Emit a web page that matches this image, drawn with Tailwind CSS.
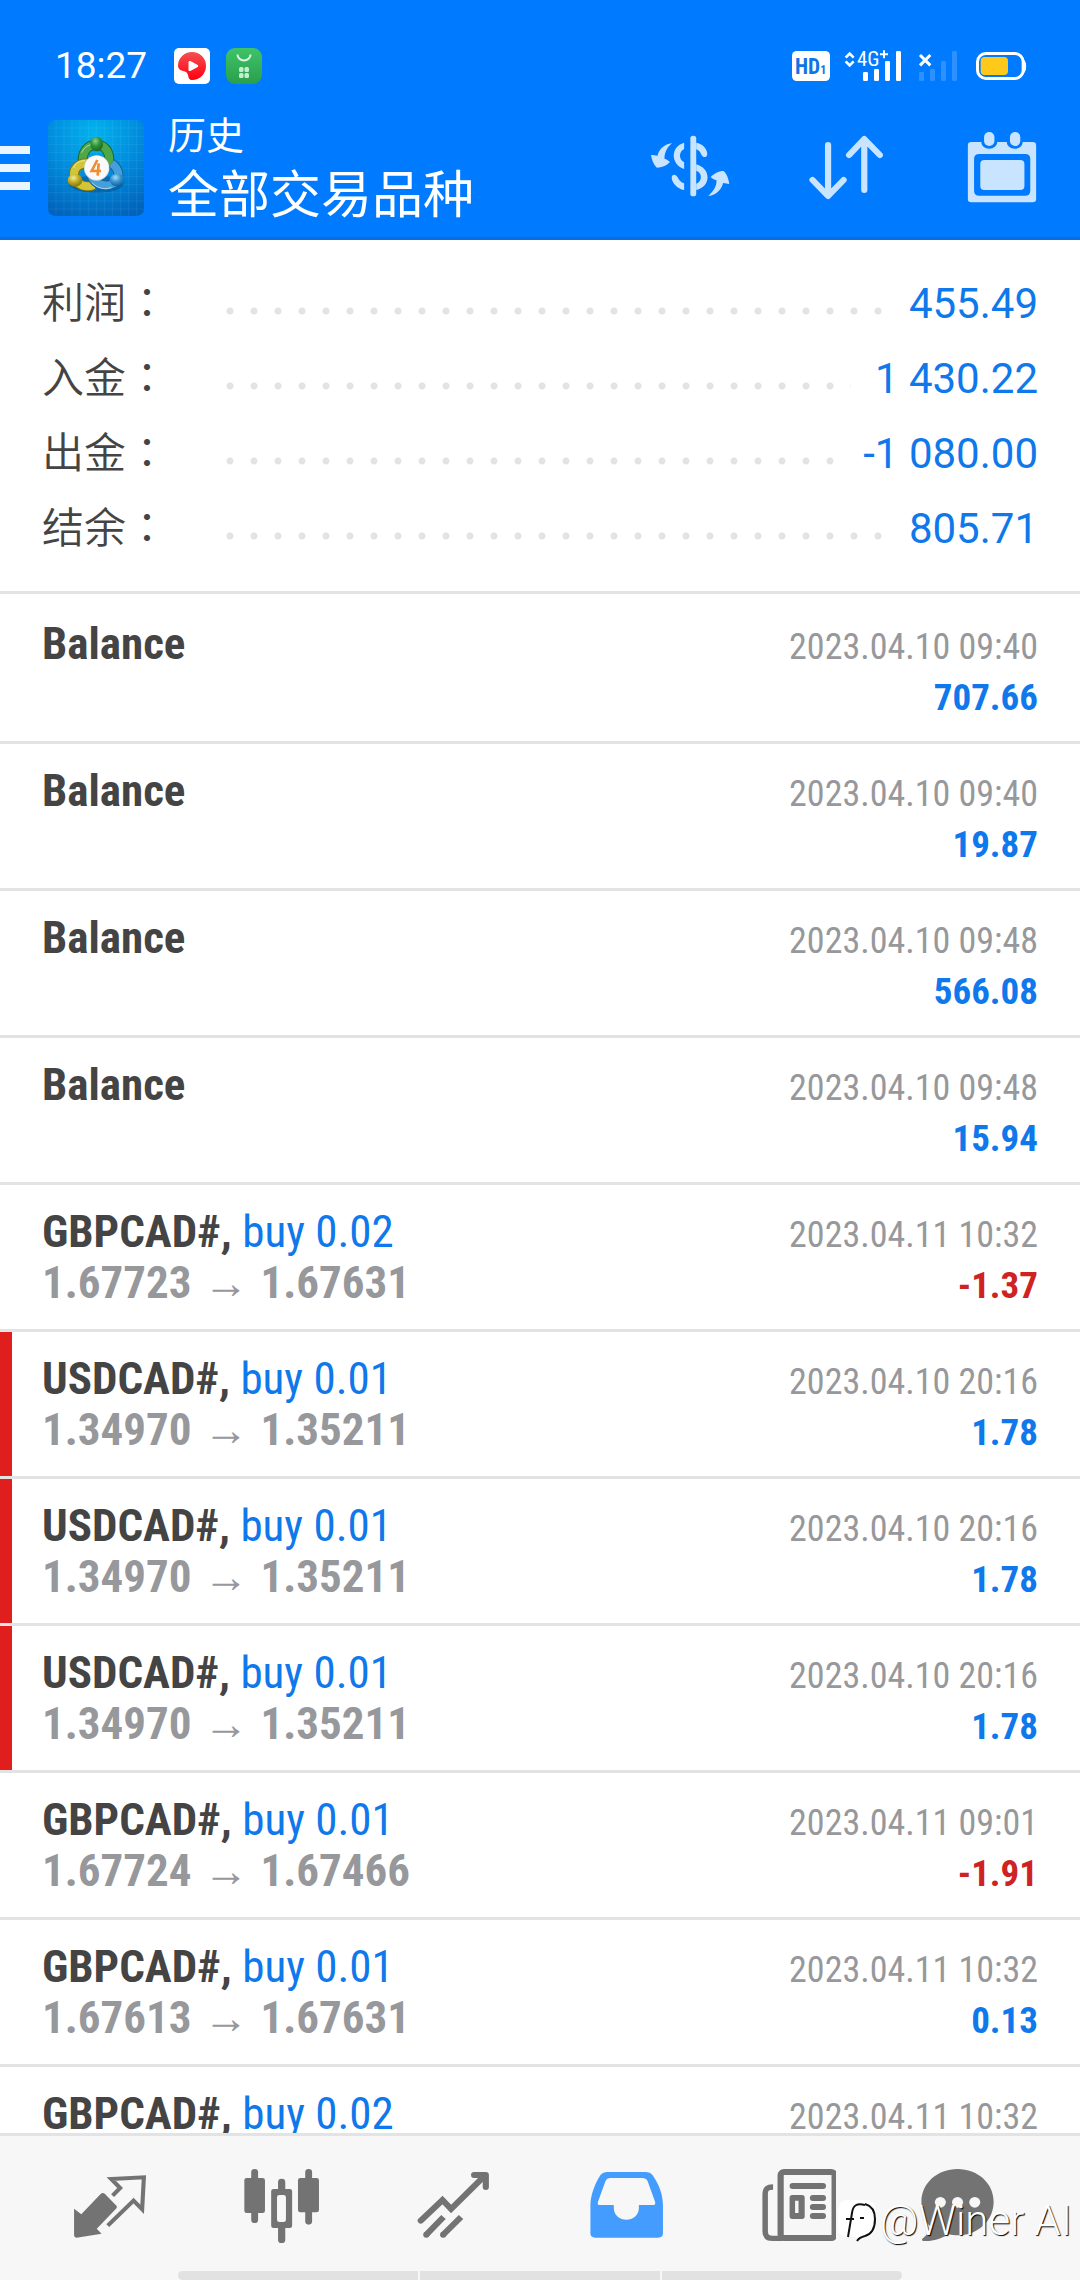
<!DOCTYPE html>
<html lang="zh-CN">
<head>
<meta charset="utf-8">
<meta name="viewport" content="width=device-width, initial-scale=1">
<title>历史</title>
<script src="https://cdn.jsdelivr.net/npm/@tailwindcss/browser@4"></script>
</head>
<body class="flex h-screen flex-col overflow-hidden bg-white font-['Roboto','Noto_Sans_CJK_SC',sans-serif] text-[#444]">

<header class="shrink-0 border-b-3 border-[#0a6fdc] bg-[#007aff] text-white">
  <!-- status bar -->
  <div class="flex items-center justify-between pt-[46px] pr-[50px] pl-[55px]">
    <div class="flex items-center gap-4">
      <span class="w-[103px] text-[37px] leading-10">18:27</span>
      <svg class="h-9 w-9" viewBox="0 0 36 36" aria-hidden="true">
        <defs><linearGradient id="red" x1="0" y1="0" x2="0" y2="1"><stop offset="0" stop-color="#f45050"/><stop offset="1" stop-color="#ff0010"/></linearGradient></defs>
        <rect width="36" height="36" rx="5" fill="#fff"/>
        <path d="M18 4a14 14 0 1 1 0 28c-3 0-3.500-2.500-4-5-.6-2.600-2-3.200-5-4-3-.8-5-2.500-5-5A14 14 0 0 1 18 4Z" fill="url(#red)"/>
        <path d="M14.500 14.500c0-1.500 1-2 2.300-1.300l6.500 3.500c1.200.7 1.200 1.900 0 2.600l-6.500 3.500c-1.300.7-2.300.2-2.300-1.300Z" fill="#fff"/>
      </svg>
      <svg class="h-9 w-9" viewBox="0 0 36 36" aria-hidden="true">
        <defs><linearGradient id="green" x1="0" y1="0" x2="0" y2="1"><stop offset="0" stop-color="#3ec368"/><stop offset="1" stop-color="#2a9f4c"/></linearGradient></defs>
        <rect width="36" height="36" rx="9" fill="url(#green)"/>
        <path d="M11.500 6.500a6.500 6 0 0 0 13 0" fill="none" stroke="#dff6e5" stroke-width="2"/>
        <g fill="#c5edcf"><rect x="13" y="19" width="4.500" height="5" rx="1.500"/><rect x="18.500" y="19" width="4.500" height="5" rx="1.500"/><rect x="13" y="25" width="4.500" height="5" rx="1.500"/><rect x="18.500" y="25" width="4.500" height="5" rx="1.500"/></g>
      </svg>
    </div>
    <svg class="h-10 w-60" viewBox="15 18 720 120" role="img" aria-label="HD 4G+">
      <rect x="21" y="33" width="114" height="90" rx="14" fill="#fff"/>
      <g class="font-['Roboto_Condensed',sans-serif]" fill="#0f74e6" font-weight="700"><text x="30" y="102" font-size="64">HD</text><text x="106" y="102" font-size="36">1</text></g>
      <g fill="none" stroke="#fff" stroke-width="8"><path d="m182 53 12-12 12 12M182 64l12 12 12-12"/></g>
      <g class="font-['Roboto_Condensed',sans-serif]" fill="#fff" font-weight="400"><text x="216" y="78" font-size="62">4G</text></g>
      <path d="M285 43h24M297 31v24" stroke="#fff" stroke-width="6"/>
      <g fill="#fff"><rect x="234" y="96" width="15" height="27" rx="4"/><rect x="267" y="87" width="15" height="36" rx="4"/><rect x="300" y="63" width="15" height="60" rx="4"/><rect x="333" y="33" width="15" height="90" rx="4"/></g>
      <g fill="#2d91ff"><rect x="402" y="96" width="15" height="27" rx="4"/><rect x="435" y="87" width="15" height="36" rx="4"/><rect x="468" y="63" width="15" height="60" rx="4"/><rect x="501" y="33" width="15" height="90" rx="4"/></g>
      <path d="m405 45 31 31M436 45l-31 31" stroke="#fff" stroke-width="9"/>
      <rect x="577.500" y="40.500" width="137" height="75" rx="25" fill="none" stroke="#fff" stroke-width="9"/>
      <path d="M717 62c5 6 7 26 0 34Z" fill="#fff" stroke="#fff" stroke-width="4"/>
      <rect x="587" y="51" width="82" height="54" rx="12" fill="#ffc91c"/>
    </svg>
  </div>
  <!-- title bar -->
  <div class="flex items-center pt-[22px] pr-[38px] pb-[9px]">
    <button type="button" aria-label="菜单" class="flex h-11 w-[30px] flex-col justify-between">
      <span class="h-2 w-full bg-[#eaf5ff]"></span><span class="h-2 w-full bg-[#eaf5ff]"></span><span class="h-2 w-full bg-[#eaf5ff]"></span>
    </button>
    <svg class="ml-[18px] h-24 w-24" viewBox="24 30 288 288" role="img" aria-label="MetaTrader 4">
      <defs>
        <radialGradient id="sky" cx=".48" cy=".12" r=".95"><stop offset="0" stop-color="#00b2ee"/><stop offset=".45" stop-color="#0090e0"/><stop offset="1" stop-color="#0062ba"/></radialGradient>
        <radialGradient id="gb" cx=".4" cy=".3" r=".7"><stop offset="0" stop-color="#8fd08a"/><stop offset=".5" stop-color="#2f9437"/><stop offset="1" stop-color="#1a6a22"/></radialGradient>
        <radialGradient id="yb" cx=".4" cy=".3" r=".7"><stop offset="0" stop-color="#f4ee9c"/><stop offset=".5" stop-color="#bfae22"/><stop offset="1" stop-color="#857809"/></radialGradient>
        <radialGradient id="bb" cx=".4" cy=".3" r=".7"><stop offset="0" stop-color="#a5dcf8"/><stop offset=".5" stop-color="#3594d2"/><stop offset="1" stop-color="#11629f"/></radialGradient>
      </defs>
      <rect x="24" y="30" width="288" height="288" rx="22" fill="url(#sky)"/>
      <path d="M48 30v288M72 30v288M96 30v288M120 30v288M145 30v288M169 30v288M193 30v288M217 30v288M242 30v288M266 30v288M290 30v288M24 54h288M24 79h288M24 103h288M24 127h288M24 151h288M24 175h288M24 200h288M24 224h288M24 248h288M24 273h288M24 297h288" stroke="#fff" stroke-opacity=".1" stroke-width="2"/>
      <ellipse cx="169" cy="222" rx="82" ry="26" fill="#003a70" opacity=".35"/>
      <g fill="none">
        <path d="M131 168c-10-38 10-64 38-64s48 28 34 66" stroke="#1b6d2b" stroke-width="30"/><path d="M131 168c-10-38 10-64 38-64s48 28 34 66" stroke="#4fa848" stroke-width="24"/>
        <path d="M148 160c-34-4-52 20-44 44 8 22 34 30 58 21" stroke="#7c7413" stroke-width="30"/><path d="M148 160c-34-4-52 20-44 44 8 22 34 30 58 21" stroke="#d2c636" stroke-width="24"/>
        <path d="M215 160c24 18 28 46 6 60-24 14-56 2-66-20" stroke="#15619c" stroke-width="30"/><path d="M215 160c24 18 28 46 6 60-24 14-56 2-66-20" stroke="#459fdb" stroke-width="24"/>
        <path d="M125 128c8-18 24-26 42-26M101 174c4-14 16-22 34-22M156 218c16 18 40 22 58 14" stroke="#fff" stroke-opacity=".55" stroke-width="3"/>
      </g>
      <ellipse cx="170" cy="102" rx="19" ry="22" fill="url(#gb)"/>
      <ellipse cx="105" cy="211" rx="22" ry="19" fill="url(#yb)"/>
      <ellipse cx="231" cy="210" rx="22" ry="19" fill="url(#bb)"/>
      <circle cx="170" cy="174" r="38" fill="#d7d9dc"/><circle cx="170" cy="173" r="36" fill="#fafafa"/>
      <path d="M172 150 155 183h28M176 160l-3 37" fill="none" stroke="#ef8d2f" stroke-width="8"/>
    </svg>
    <div class="ml-6 flex-1">
      <h1 class="text-[38px] leading-14">历史</h1>
      <p class="text-[51px] leading-16">全部交易品种</p>
    </div>
    <div class="flex gap-[76px]">
      <button type="button" aria-label="货币">
        <svg class="h-18 w-20" viewBox="319 336 232 216" preserveAspectRatio="none" fill="#c9e4ff">
          <rect x="436" y="347" width="17" height="182" rx="8"/>
          <path d="M453 368c18 3 32 18 32 34 0 12-12 12-17 2-4-9-8-14-15-16ZM418 368v19c-16 8-16 32 0 40v20c-40-15-40-67 0-79ZM453 433c44 12 44 68 0 77v-19c18-6 18-34 0-39ZM418 510c-20-4-36-22-36-37 0-12 13-11 17-1 4 9 10 16 19 18Z"/>
          <path d="M383 369c-22 4-38 18-42 38-6 0-14-2-19-2 2 16 8 30 17 38 14 0 28-6 38-17-5-5-10-8-16-10 0-20 8-34 22-47ZM488 528c24-3 38-19 43-39 6 0 13 3 18 3-2-15-7-31-17-39-14 0-28 8-37 18 5 5 10 8 17 10 0 20-10 34-24 47Z"/>
        </svg>
      </button>
      <button type="button" aria-label="排序">
        <svg class="h-18 w-20" viewBox="772 336 232 216" preserveAspectRatio="none" fill="none" stroke="#c9e4ff" stroke-width="18" stroke-linecap="round" stroke-linejoin="round"><path d="M836 375v152M791 480l45 48 45-48M941 510V358M897 405l44-48 45 48"/></svg>
      </button>
      <button type="button" aria-label="日历">
        <svg class="h-18 w-20" viewBox="1225 336 232 216" preserveAspectRatio="none" fill="#c9e4ff">
          <path fill-rule="evenodd" d="M1252 366h29c0 12 10 20 23 20s23-8 23-20h28c0 12 10 20 23 20s23-8 23-20h29q10 0 10 10v161q0 10-10 10h-178q-10 0-10-10V376q0-10 10-10ZM1275 402q-15 0-15 15v95q0 15 15 15h133q15 0 15-15v-95q0-15-15-15Z"/>
          <rect x="1278" y="420" width="128" height="90" rx="12"/><rect x="1289" y="336" width="30" height="42" rx="15"/><rect x="1364" y="336" width="30" height="42" rx="15"/>
        </svg>
      </button>
    </div>
  </div>
</header>

<main class="min-h-0 flex-1 overflow-y-auto [scrollbar-width:none]">
  <dl class="border-b-3 border-[#e3e3e3] px-[42px] pt-[26px] pb-[25px] text-[42px] leading-[75px]">
    <div class="flex h-[75px]"><dt class="w-44 font-[350]">利润<span lang="zh-TW" class="font-['Noto_Sans_CJK_TC'] leading-none">：</span></dt><dd class="mr-6 flex-1 bg-[radial-gradient(circle_at_12px_45px,#e3e3e3_3px,transparent_4px)] bg-[length:24px_75px] bg-repeat-x" aria-hidden="true"></dd><dd class="text-[#0f78eb]">455.49</dd></div>
    <div class="flex h-[75px]"><dt class="w-44 font-[350]">入金<span lang="zh-TW" class="font-['Noto_Sans_CJK_TC'] leading-none">：</span></dt><dd class="mr-6 flex-1 bg-[radial-gradient(circle_at_12px_45px,#e3e3e3_3px,transparent_4px)] bg-[length:24px_75px] bg-repeat-x" aria-hidden="true"></dd><dd class="text-[#0f78eb]">1 430.22</dd></div>
    <div class="flex h-[75px]"><dt class="w-44 font-[350]">出金<span lang="zh-TW" class="font-['Noto_Sans_CJK_TC'] leading-none">：</span></dt><dd class="mr-6 flex-1 bg-[radial-gradient(circle_at_12px_45px,#e3e3e3_3px,transparent_4px)] bg-[length:24px_75px] bg-repeat-x" aria-hidden="true"></dd><dd class="text-[#0f78eb]">-1 080.00</dd></div>
    <div class="flex h-[75px]"><dt class="w-44 font-[350]">结余<span lang="zh-TW" class="font-['Noto_Sans_CJK_TC'] leading-none">：</span></dt><dd class="mr-6 flex-1 bg-[radial-gradient(circle_at_12px_45px,#e3e3e3_3px,transparent_4px)] bg-[length:24px_75px] bg-repeat-x" aria-hidden="true"></dd><dd class="text-[#0f78eb]">805.71</dd></div>
  </dl>

  <ul class="pt-[3px] font-['Roboto_Condensed','Noto_Sans_CJK_SC',sans-serif] text-[45px] leading-[51px]">
    <li class="border-b-3 border-[#e3e3e3]"><div class="border-l-12 border-transparent pt-[21px] pr-[42px] pb-[21px] pl-[30px]">
      <div class="flex h-[51px] items-baseline justify-between"><b class="font-bold">Balance</b><time class="text-[36px] text-[#97989c]">2023.04.10 09:40</time></div>
      <div class="h-[51px] text-right"><b class="text-[37px] font-bold text-[#0f78eb]">707.66</b></div>
    </div></li>
    <li class="border-b-3 border-[#e3e3e3]"><div class="border-l-12 border-transparent pt-[21px] pr-[42px] pb-[21px] pl-[30px]">
      <div class="flex h-[51px] items-baseline justify-between"><b class="font-bold">Balance</b><time class="text-[36px] text-[#97989c]">2023.04.10 09:40</time></div>
      <div class="h-[51px] text-right"><b class="text-[37px] font-bold text-[#0f78eb]">19.87</b></div>
    </div></li>
    <li class="border-b-3 border-[#e3e3e3]"><div class="border-l-12 border-transparent pt-[21px] pr-[42px] pb-[21px] pl-[30px]">
      <div class="flex h-[51px] items-baseline justify-between"><b class="font-bold">Balance</b><time class="text-[36px] text-[#97989c]">2023.04.10 09:48</time></div>
      <div class="h-[51px] text-right"><b class="text-[37px] font-bold text-[#0f78eb]">566.08</b></div>
    </div></li>
    <li class="border-b-3 border-[#e3e3e3]"><div class="border-l-12 border-transparent pt-[21px] pr-[42px] pb-[21px] pl-[30px]">
      <div class="flex h-[51px] items-baseline justify-between"><b class="font-bold">Balance</b><time class="text-[36px] text-[#97989c]">2023.04.10 09:48</time></div>
      <div class="h-[51px] text-right"><b class="text-[37px] font-bold text-[#0f78eb]">15.94</b></div>
    </div></li>
    <li class="border-b-3 border-[#e3e3e3]"><div class="border-l-12 border-transparent pt-[21px] pr-[42px] pb-[21px] pl-[30px]">
      <div class="flex h-[51px] items-baseline justify-between"><p><b class="font-bold">GBPCAD#,</b> <span class="text-[#0f78eb]">buy 0.02</span></p><time class="text-[36px] text-[#97989c]">2023.04.11 10:32</time></div>
      <div class="flex h-[51px] items-baseline justify-between"><p class="flex items-baseline gap-3 font-bold text-[#97989c]"><span>1.67723</span><span class="font-['Liberation_Sans'] leading-none">→</span><span>1.67631</span></p><b class="text-[37px] font-bold text-[#cf2222]">-1.37</b></div>
    </div></li>
    <li class="border-b-3 border-[#e3e3e3]"><div class="border-l-12 border-[#e01e1e] pt-[21px] pr-[42px] pb-[21px] pl-[30px]">
      <div class="flex h-[51px] items-baseline justify-between"><p><b class="font-bold">USDCAD#,</b> <span class="text-[#0f78eb]">buy 0.01</span></p><time class="text-[36px] text-[#97989c]">2023.04.10 20:16</time></div>
      <div class="flex h-[51px] items-baseline justify-between"><p class="flex items-baseline gap-3 font-bold text-[#97989c]"><span>1.34970</span><span class="font-['Liberation_Sans'] leading-none">→</span><span>1.35211</span></p><b class="text-[37px] font-bold text-[#0f78eb]">1.78</b></div>
    </div></li>
    <li class="border-b-3 border-[#e3e3e3]"><div class="border-l-12 border-[#e01e1e] pt-[21px] pr-[42px] pb-[21px] pl-[30px]">
      <div class="flex h-[51px] items-baseline justify-between"><p><b class="font-bold">USDCAD#,</b> <span class="text-[#0f78eb]">buy 0.01</span></p><time class="text-[36px] text-[#97989c]">2023.04.10 20:16</time></div>
      <div class="flex h-[51px] items-baseline justify-between"><p class="flex items-baseline gap-3 font-bold text-[#97989c]"><span>1.34970</span><span class="font-['Liberation_Sans'] leading-none">→</span><span>1.35211</span></p><b class="text-[37px] font-bold text-[#0f78eb]">1.78</b></div>
    </div></li>
    <li class="border-b-3 border-[#e3e3e3]"><div class="border-l-12 border-[#e01e1e] pt-[21px] pr-[42px] pb-[21px] pl-[30px]">
      <div class="flex h-[51px] items-baseline justify-between"><p><b class="font-bold">USDCAD#,</b> <span class="text-[#0f78eb]">buy 0.01</span></p><time class="text-[36px] text-[#97989c]">2023.04.10 20:16</time></div>
      <div class="flex h-[51px] items-baseline justify-between"><p class="flex items-baseline gap-3 font-bold text-[#97989c]"><span>1.34970</span><span class="font-['Liberation_Sans'] leading-none">→</span><span>1.35211</span></p><b class="text-[37px] font-bold text-[#0f78eb]">1.78</b></div>
    </div></li>
    <li class="border-b-3 border-[#e3e3e3]"><div class="border-l-12 border-transparent pt-[21px] pr-[42px] pb-[21px] pl-[30px]">
      <div class="flex h-[51px] items-baseline justify-between"><p><b class="font-bold">GBPCAD#,</b> <span class="text-[#0f78eb]">buy 0.01</span></p><time class="text-[36px] text-[#97989c]">2023.04.11 09:01</time></div>
      <div class="flex h-[51px] items-baseline justify-between"><p class="flex items-baseline gap-3 font-bold text-[#97989c]"><span>1.67724</span><span class="font-['Liberation_Sans'] leading-none">→</span><span>1.67466</span></p><b class="text-[37px] font-bold text-[#cf2222]">-1.91</b></div>
    </div></li>
    <li class="border-b-3 border-[#e3e3e3]"><div class="border-l-12 border-transparent pt-[21px] pr-[42px] pb-[21px] pl-[30px]">
      <div class="flex h-[51px] items-baseline justify-between"><p><b class="font-bold">GBPCAD#,</b> <span class="text-[#0f78eb]">buy 0.01</span></p><time class="text-[36px] text-[#97989c]">2023.04.11 10:32</time></div>
      <div class="flex h-[51px] items-baseline justify-between"><p class="flex items-baseline gap-3 font-bold text-[#97989c]"><span>1.67613</span><span class="font-['Liberation_Sans'] leading-none">→</span><span>1.67631</span></p><b class="text-[37px] font-bold text-[#0f78eb]">0.13</b></div>
    </div></li>
    <li><div class="border-l-12 border-transparent pt-[21px] pr-[42px] pl-[30px]">
      <div class="flex h-[51px] items-baseline justify-between"><p><b class="font-bold">GBPCAD#,</b> <span class="text-[#0f78eb]">buy 0.02</span></p><time class="text-[36px] text-[#97989c]">2023.04.11 10:32</time></div>
    </div></li>
  </ul>
</main>

<footer class="relative shrink-0 border-t-3 border-[#e3e3e3] bg-[#f7f7f7]">
  <nav class="grid grid-cols-[172fr_172fr_172fr_172fr_172fr_144fr] justify-items-center pt-[31px] pr-[52px] pb-7 pl-6">
    <a href="#" aria-label="行情"><svg class="size-19" viewBox="209 261 221 228" preserveAspectRatio="none">
      <path fill="#737373" d="M293 341q6-5 12 1l34 36q2 4-2 8l-56 60 14 15-73 12q-7 0-7-7V386l21 17Z"/>
      <path fill="none" stroke="#737373" stroke-width="12" d="m327 347 22-23-26-27 95-5-5 96-25-26-75 75"/></svg></a>
    <a href="#" aria-label="图表"><svg class="size-19" viewBox="708 261 221 228" preserveAspectRatio="none" fill="#737373">
      <rect x="709" y="294" width="60" height="105" rx="7"/><rect x="729" y="267" width="20" height="162" rx="10"/>
      <rect x="865" y="294" width="61" height="103" rx="7"/><rect x="886" y="267" width="20" height="167" rx="10"/>
      <rect x="807" y="296" width="21" height="44" rx="10"/><rect x="807" y="432" width="21" height="57" rx="10"/>
      <path fill-rule="evenodd" d="M794 327h47q7 0 7 7v103q0 7-7 7h-47q-7 0-7-7V334q0-7 7-7ZM811 345q-7 0-7 7v67q0 7 7 7h12q7 0 7-7v-67q0-7-7-7Z"/></svg></a>
    <a href="#" aria-label="交易"><svg class="size-19" viewBox="1208 261 221 228" preserveAspectRatio="none" fill="none" stroke="#737373" stroke-width="18">
      <path stroke-linecap="round" d="m1222 422 63-62 25 27 98-100"/><path stroke-linecap="round" stroke-linejoin="round" d="M1377 285h34v36"/><path d="m1288 411-51 54M1339 411l-53 54"/><circle cx="1238" cy="464" r="9" fill="#737373" stroke="none"/><circle cx="1287" cy="464" r="9" fill="#737373" stroke="none"/></svg></a>
    <a href="#" aria-label="历史" aria-current="page"><svg class="size-19" viewBox="139 261 221 228" preserveAspectRatio="none">
      <path fill="#459cff" fill-rule="evenodd" d="M194 276h114q12 0 18 8c22 32 31 62 31 94v82q0 13-14 13H160q-14 0-14-13v-82c0-32 12-66 30-94q6-8 18-8ZM204 294q-10 0-14 9l-22 62q-3 10 6 10h40v8c0 48 73 48 73 0v-8h40q10 0 7-10l-21-60q-4-11-16-11Z"/></svg></a>
    <a href="#" aria-label="新闻"><svg class="size-19" viewBox="639 261 221 228" preserveAspectRatio="none">
      <path fill="none" stroke="#737373" stroke-width="16" d="M677 321c-16 0-23 6-23 20v112c0 16 6 22 20 22h30"/>
      <rect x="699" y="276" width="157" height="198" rx="10" fill="none" stroke="#737373" stroke-width="18"/>
      <g fill="#737373"><rect x="725" y="309" width="106" height="18" rx="9"/><rect x="784" y="345" width="47" height="18" rx="9"/><rect x="784" y="372" width="47" height="18" rx="9"/><rect x="784" y="399" width="47" height="18" rx="9"/><path fill-rule="evenodd" d="M733 345h28q8 0 8 8v56q0 8-8 8h-28q-8 0-8-8v-56q0-8 8-8ZM741 362v37h10v-37Z"/></g></svg></a>
    <a href="#" aria-label="消息"><svg class="size-19" viewBox="1098 261 221 228" preserveAspectRatio="none">
      <path fill="#737373" d="M1213 267c58 0 105 42 105 98 0 58-48 101-104 101-10 0-18-1-26-3-24 14-50 22-72 20-8-1-8-5-2-10 10-9 17-20 20-33-18-20-26-44-26-75 0-56 47-98 105-98Z"/><g fill="#f7f7f7"><circle cx="1163" cy="367" r="16"/><circle cx="1213" cy="367" r="16"/><circle cx="1263" cy="367" r="16"/></g></svg></a>
  </nav>
  <div class="mx-auto flex h-[9px] w-[67%] gap-0.5 overflow-hidden rounded-l-full rounded-r-full" aria-hidden="true">
    <span class="flex-1 bg-[#e2e2e2]"></span><span class="flex-1 bg-[#e2e2e2]"></span><span class="flex-1 bg-[#e2e2e2]"></span>
  </div>
  <div class="absolute right-2 bottom-8 flex items-center gap-1 text-[42px] leading-[54px] font-light text-white [text-shadow:1px_1px_1px_#000]">
    <svg class="h-[42px] w-[38px]" viewBox="0 0 38 42" aria-hidden="true"><path d="M8 0h20q9 0 10 9v16q-1 11-10 12l-8 4-2-4H10Q0 37 0 26V12Q0 1 8 0Z" fill="#fff"/><path d="M27 5c-8-2-12 0-13 8l-4 24M8 19h8M22 18h4M27 4c7 2 10 7 10 15 0 10-3 15-10 17-4 1-6 2-8 5" fill="none" stroke="#111" stroke-width="2"/></svg>
    <span>@Winer AI</span>
  </div>
</footer>
</body>
</html>
